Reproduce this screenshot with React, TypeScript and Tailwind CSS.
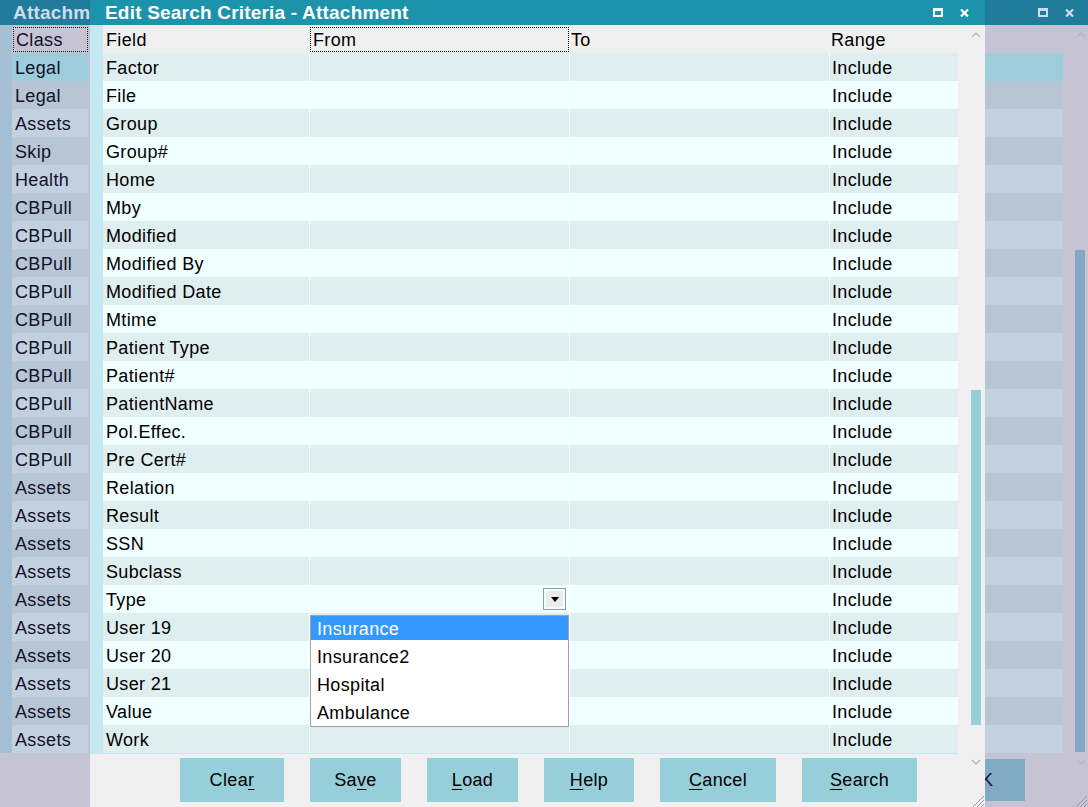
import React from "react";

const fields = [
  "Factor", "File", "Group", "Group#", "Home", "Mby", "Modified", "Modified By",
  "Modified Date", "Mtime", "Patient Type", "Patient#", "PatientName", "Pol.Effec.",
  "Pre Cert#", "Relation", "Result", "SSN", "Subclass", "Type", "User 19", "User 20",
  "User 21", "Value", "Work",
];

const classes = [
  "Legal", "Legal", "Assets", "Skip", "Health",
  "CBPull", "CBPull", "CBPull", "CBPull", "CBPull", "CBPull", "CBPull", "CBPull", "CBPull", "CBPull",
  "Assets", "Assets", "Assets", "Assets", "Assets", "Assets", "Assets", "Assets", "Assets", "Assets",
];

const options = ["Insurance", "Insurance2", "Hospital", "Ambulance"];

function Chevron({ down = false }: { down?: boolean }) {
  return (
    <svg width="10" height="6" viewBox="0 0 10 6" className="block">
      <polyline
        points={down ? "1,1 5,5 9,1" : "1,5 5,1 9,5"}
        fill="none"
        stroke="#b4b4b8"
        strokeWidth="1.3"
      />
    </svg>
  );
}

function Grip() {
  return (
    <svg width="13" height="12" viewBox="0 0 13 12" className="block">
      <line x1="12" y1="1" x2="1" y2="12" stroke="#9a9aa6" strokeWidth="1" />
      <line x1="12" y1="5" x2="5" y2="12" stroke="#9a9aa6" strokeWidth="1" />
      <line x1="12" y1="9" x2="9" y2="12" stroke="#9a9aa6" strokeWidth="1" />
    </svg>
  );
}

function TitleIcons({ color }: { color: string }) {
  return (
    <div className="flex items-center gap-[17px]">
      <div className={`w-[10px] h-[9px] border-2 border-t-[3px] ${color}`} />
      <svg width="9" height="8" viewBox="0 0 9 8" className="block">
        <line x1="1" y1="0.5" x2="8" y2="7.5" stroke="currentColor" strokeWidth="2.2" />
        <line x1="8" y1="0.5" x2="1" y2="7.5" stroke="currentColor" strokeWidth="2.2" />
      </svg>
    </div>
  );
}

function Key({ pre, k, post }: { pre?: string; k: string; post?: string }) {
  return (
    <>
      {pre}
      <span className="underline underline-offset-[3px] decoration-1">{k}</span>
      {post}
    </>
  );
}

export default function App() {
  return (
    <div className="relative w-[1088px] h-[807px] overflow-hidden bg-[#c6c4d4] font-['Liberation_Sans',Arial,sans-serif] text-[18px] tracking-[0.35px] leading-none">
      {/* background window */}
      <div className="flex flex-col h-full">
        <div className="h-[25px] shrink-0 bg-[#217b9b] flex items-center pl-[13px] pr-[14px] text-[#cfdcec]">
          <span className="font-bold text-[19px] tracking-[0.2px]">Attachm</span>
          <div className="ml-auto">
            <TitleIcons color="border-[#cfdcec]" />
          </div>
        </div>
        <div className="flex flex-1">
          <div className="w-[1063px] flex flex-col">
            <div className="flex h-[728px]">
              <div className="w-[12px] bg-[#a5c0d5]" />
              <div className="w-[1051px] flex flex-col text-[#12122c]">
                <div className="h-[28px] flex items-center pl-[1px]">
                  <div className="w-[75px] h-[25px] border border-dotted border-[#222] flex items-center pl-[2px] pt-px">
                    Class
                  </div>
                </div>
                {classes.map((c, i) => {
                  const bg = i === 0 ? "bg-[#9dcddb]" : i % 2 ? "bg-[#b7c5d4]" : "bg-[#c3d0df]";
                  return (
                    <div key={i} className="h-[28px] flex">
                      <div className={`w-[76px] flex items-center pl-[3px] pt-px ${bg}`}>{c}</div>
                      <div className="w-[2px]" />
                      <div className={`flex-1 ${bg}`} />
                    </div>
                  );
                })}
              </div>
            </div>
            <div className="flex-1 pl-[935px] pt-[6px]">
              <div className="w-[90px] h-[42px] bg-[#82aac5] flex items-center justify-center text-[#12122c]">
                OK
              </div>
            </div>
          </div>
          <div className="w-[12px]" />
          <div className="w-[13px] flex flex-col">
            <div className="h-[20px] flex items-center pl-[1px]"><Chevron /></div>
            <div className="mt-[205px] h-[502px] w-[10px] bg-[#82aac5]" />
            <div className="h-[20px] flex items-center pl-[1px]"><Chevron down /></div>
            <div className="mt-auto"><Grip /></div>
          </div>
        </div>
      </div>

      {/* dialog */}
      <div className="absolute left-[90px] top-0 w-[895px] h-[807px] flex flex-col bg-[#f0f0f0]">
        <div className="h-[25px] shrink-0 bg-[#1d93ab] flex items-center pl-[15px] pr-[16px] text-white">
          <span className="font-bold text-[19px] tracking-[0.2px]">Edit Search Criteria - Attachment</span>
          <div className="ml-auto">
            <TitleIcons color="border-white" />
          </div>
        </div>
        <div className="flex flex-1">
          <div className="w-[868px] flex flex-col">
            <div className="flex h-[728px]">
              <div className="w-[13px] bg-[#c4e9f0]" />
              <div className="w-[855px] flex flex-col text-black">
                <div className="h-[28px] flex items-center bg-[#f0f0f0] pt-px">
                  <div className="w-[207px] pl-[3px]">Field</div>
                  <div className="w-[260px] h-[28px] flex items-center">
                    <div className="w-[259px] h-[25px] border border-dotted border-black flex items-center pl-[2px]">
                      From
                    </div>
                  </div>
                  <div className="w-[260px] pl-[1px]">To</div>
                  <div className="w-[128px] pl-[1px]">Range</div>
                </div>
                {fields.map((f, i) => {
                  const bg = i % 2 ? "bg-[#f0ffff]" : "bg-[#dfeeee]";
                  return (
                    <div key={f} className={`h-[28px] flex ${bg}`}>
                      <div className="w-[207px] border-r border-white flex items-center pl-[3px] pt-px">{f}</div>
                      <div className="w-[260px] border-r border-white flex items-center justify-end pr-[3px]">
                        {f === "Type" && (
                          <div className="w-[23px] h-[22px] border border-[#9a9a9a] flex items-center justify-center">
                            <div className="w-[17px] h-[16px] bg-[#ececec] flex items-center justify-center">
                              <svg width="8" height="5" viewBox="0 0 8 5" className="block">
                                <polygon points="0,0 8,0 4,5" fill="#000" />
                              </svg>
                            </div>
                          </div>
                        )}
                      </div>
                      <div className="w-[260px] border-r border-white" />
                      <div className="w-[128px] flex items-center pl-[2px] pt-px">Include</div>
                    </div>
                  );
                })}
              </div>
            </div>
            <div className="h-px w-[868px] bg-[#c4e9f0]" />
            <div className="flex gap-[26px] pl-[90px] pt-[4px]">
              <button className="w-[104px] h-[44px] bg-[#96cfd9] text-black"><Key pre="Clea" k="r" /></button>
              <button className="w-[91px] h-[44px] bg-[#96cfd9] text-black"><Key pre="Sa" k="v" post="e" /></button>
              <button className="w-[91px] h-[44px] bg-[#96cfd9] text-black"><Key k="L" post="oad" /></button>
              <button className="w-[90px] h-[44px] bg-[#96cfd9] text-black"><Key k="H" post="elp" /></button>
              <button className="w-[116px] h-[44px] bg-[#96cfd9] text-black"><Key k="C" post="ancel" /></button>
              <button className="w-[115px] h-[44px] bg-[#96cfd9] text-black"><Key k="S" post="earch" /></button>
            </div>
          </div>
          <div className="w-[27px] flex flex-col pl-[13px]">
            <div className="h-[20px] flex items-center"><Chevron /></div>
            <div className="mt-[345px] h-[335px] w-[10px] bg-[#97cfd9]" />
            <div className="mt-[27px] h-[20px] flex items-center"><Chevron down /></div>
            <div className="mt-auto -ml-[13px] pl-[14px]"><Grip /></div>
          </div>
        </div>

        {/* open dropdown */}
        <div className="absolute left-[220px] top-[615px] w-[259px] bg-white border border-[#a0a0a0] flex flex-col gap-[4px] pb-[2px] text-black">
          {options.map((o, i) => (
            <div
              key={o}
              className={`h-[24px] flex items-center pl-[6px] pt-px ${i === 0 ? "bg-[#3399ff] text-white" : ""}`}
            >
              {o}
            </div>
          ))}
        </div>
      </div>
    </div>
  );
}
